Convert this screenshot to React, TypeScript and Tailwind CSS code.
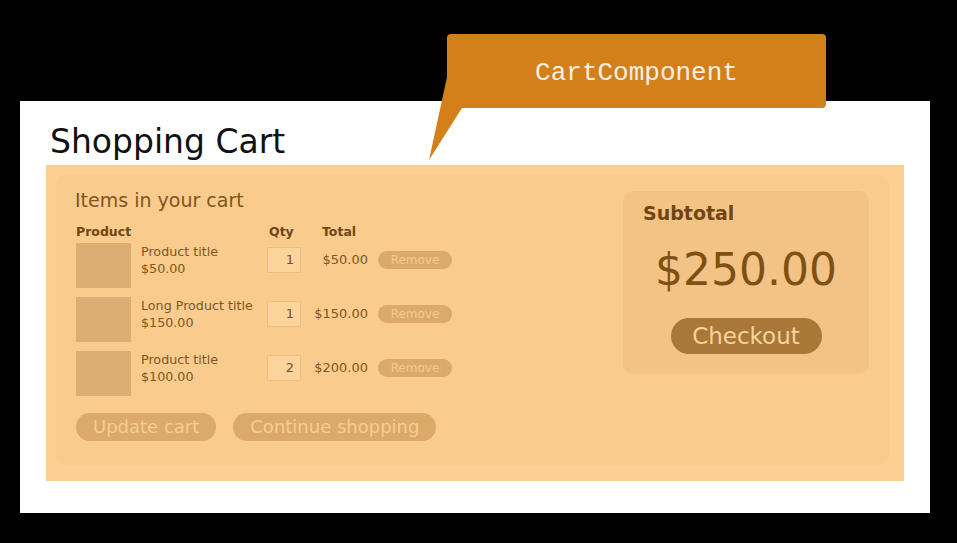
import React from 'react';

const items = [
  { title: 'Product title', price: '$50.00', qty: 1, total: '$50.00' },
  { title: 'Long Product title', price: '$150.00', qty: 1, total: '$150.00' },
  { title: 'Product title', price: '$100.00', qty: 2, total: '$200.00' },
];

const App: React.FC = () => {
  return (
    <div
      className="relative w-[957px] h-[543px] overflow-hidden bg-black pt-[101px] pl-[20px]"
      style={{ fontFamily: '"DejaVu Sans", sans-serif' }}
    >
      <div className="w-[910px] h-[412px] bg-white">
        <h1 className="pl-[30px] pt-[23px] text-[33px] leading-[36px] text-[#111]">Shopping Cart</h1>

        {/* highlighted component */}
        <div className="mt-[5px] ml-[26px] w-[858px] h-[316px] bg-[#fcd093] pl-[10px] pt-[9px] pr-[15px] pb-[16px]">
          <div className="flex h-full rounded-[12px] bg-[#f9cb8d]">
            {/* cart items */}
            <div className="flex-1 pl-[20px] pt-[15px]">
              <h2 className="text-[19px] leading-[22px] text-[#80561d] -ml-[1px]">Items in your cart</h2>

              <div className="mt-[13px] flex text-[12.5px] leading-[16px] font-bold text-[#6f4613]">
                <span className="w-[191px]">Product</span>
                <span className="w-[34px] pl-[2px]">Qty</span>
                <span className="pl-[21px]">Total</span>
              </div>

              <div className="mt-[3px] flex flex-col gap-[9px]">
                {items.map((item, i) => (
                  <div key={i} className="flex items-start">
                    <div className="w-[55px] h-[45px] bg-[#dcae73]" />
                    <div className="ml-[10px] w-[126px] text-[12.7px] leading-[17px] text-[#80561d]">
                      <div>{item.title}</div>
                      <div>{item.price}</div>
                    </div>
                    <div className="flex h-[34px] items-center">
                      <div className="w-[34px] h-[26px] border border-[#ecbf80] bg-[#fdd49b] pr-[6px] text-right text-[13px] leading-[24px] text-[#7a5019]">
                        {item.qty}
                      </div>
                      <div className="w-[67px] text-right text-[13px] text-[#80561d]">{item.total}</div>
                      <button className="ml-[10px] w-[74px] h-[18px] rounded-full bg-[#dba96a] text-[12px] leading-[18px] text-[#f5cb90]">
                        Remove
                      </button>
                    </div>
                  </div>
                ))}
              </div>

              <div className="mt-[17px] flex gap-[17px]">
                <button className="h-[28px] rounded-full bg-[#dba96a] px-[17px] text-[18px] leading-[28px] text-[#f6cd93]">
                  Update cart
                </button>
                <button className="h-[28px] rounded-full bg-[#dba96a] px-[17px] text-[18px] leading-[28px] text-[#f6cd93]">
                  Continue shopping
                </button>
              </div>
            </div>

            {/* subtotal */}
            <div className="pt-[17px] pr-[20px]">
              <div className="flex w-[246px] h-[183px] flex-col rounded-[10px] bg-[#f3c385] pl-[20px] pr-[20px] pt-[11px]">
                <div className="text-[19px] leading-[23px] font-bold text-[#6f4613]">Subtotal</div>
                <div className="mt-[19px] text-center text-[44px] leading-[52px] text-[#7d5114]">$250.00</div>
                <button className="mx-auto mt-[22px] h-[36px] w-[151px] rounded-full bg-[#a97838] text-[23px] leading-[36px] text-[#f6d39c]">
                  Checkout
                </button>
              </div>
            </div>
          </div>
        </div>
      </div>

      {/* annotation callout */}
      <svg className="pointer-events-none absolute left-0 top-0" width="957" height="543">
        <polygon points="447,77 462,108 429,160" fill="#d3801a" />
      </svg>
      <div
        className="absolute left-[447px] top-[34px] flex h-[74px] w-[379px] items-center justify-center rounded-[4px] bg-[#d3801a] pt-[4px] text-[26px] text-[#f7efe2]"
        style={{ fontFamily: '"Liberation Mono", monospace' }}
      >
        CartComponent
      </div>
    </div>
  );
};

export default App;
